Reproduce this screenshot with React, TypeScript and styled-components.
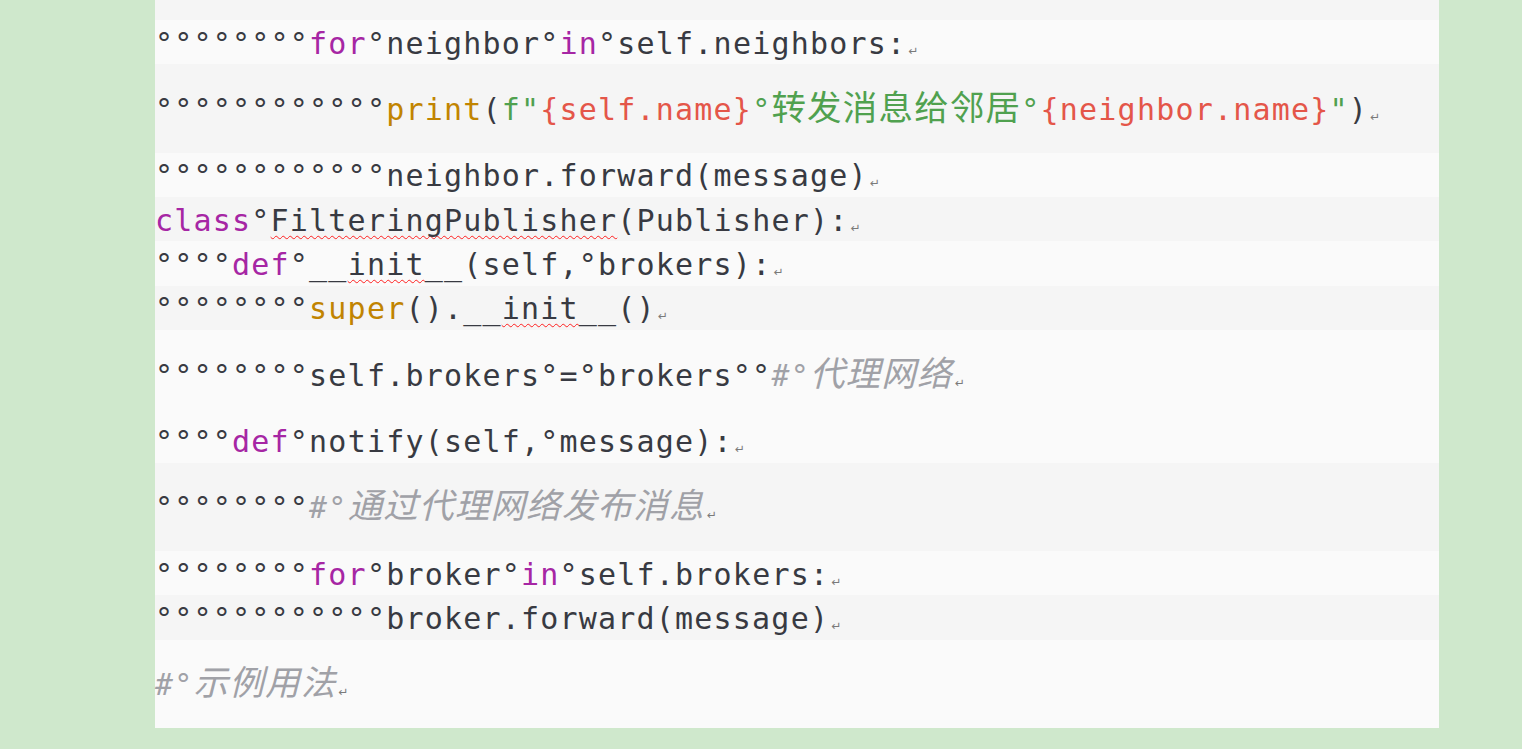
import React from "react";
import styled, { createGlobalStyle } from "styled-components";

const Global = createGlobalStyle`
  html, body {
    margin: 0;
    padding: 0;
    background: #cfe8cc;
  }
  body {
    font-family: "DejaVu Sans Mono", "Noto Sans CJK SC", monospace;
  }
`;

const Page = styled.main`
  margin-left: 155px;
  width: 1284px;
  background: #fafafa;
  display: flex;
  flex-direction: column;
`;

const Stub = styled.div`
  height: 20px;
  background: #f5f5f5;
`;

const Row = styled.div<{ $tall?: boolean; $shade?: boolean }>`
  height: ${(p) => (p.$tall ? "88.5px" : "44.25px")};
  background: ${(p) => (p.$shade ? "#f5f5f5" : "#fafafa")};
  display: flex;
  align-items: center;
`;

const Line = styled.p`
  margin: 0;
  padding-top: 10px;
  white-space: pre;
  font-size: 30px;
  line-height: 44px;
  letter-spacing: 1.2px;
  color: #383a42;
`;

const Kw = styled.span`
  color: #a626a4;
`;

const Fn = styled.span`
  color: #c18401;
`;

const Str = styled.span`
  color: #50a14f;
`;

const Interp = styled.span`
  color: #e45649;
`;

const Cmt = styled.span`
  color: #a0a1a7;
  font-style: italic;
`;

const Han = styled.span`
  font-family: "Noto Sans CJK SC", sans-serif;
  font-size: 34.5px;
  line-height: 1;
`;

const Squiggle = styled.span`
  text-decoration-line: underline;
  text-decoration-style: wavy;
  text-decoration-color: #ff1f1f;
  text-decoration-thickness: 1px;
  text-underline-offset: 4px;
  text-decoration-skip-ink: none;
`;

const Mark = styled.span`
  font-family: "DejaVu Sans", sans-serif;
  font-style: normal;
  font-size: 12px;
  letter-spacing: 0;
  color: #7a7a7a;
  margin-left: 2px;
  vertical-align: -1px;
`;

const P = () => <Mark>↵</Mark>;

export default function App() {
  return (
    <>
      <Global />
      <Page>
        <Stub />
        <Row>
          <Line>
            °°°°°°°°<Kw>for</Kw>°neighbor°<Kw>in</Kw>°self.neighbors:
            <P />
          </Line>
        </Row>
        <Row $tall $shade>
          <Line>
            °°°°°°°°°°°°<Fn>print</Fn>(<Str>f"</Str>
            <Interp>{"{self.name}"}</Interp>
            <Str>
              °<Han>转发消息给邻居</Han>°
            </Str>
            <Interp>{"{neighbor.name}"}</Interp>
            <Str>"</Str>)
            <P />
          </Line>
        </Row>
        <Row>
          <Line>
            °°°°°°°°°°°°neighbor.forward(message)
            <P />
          </Line>
        </Row>
        <Row $shade>
          <Line>
            <Kw>class</Kw>°<Squiggle>FilteringPublisher</Squiggle>(Publisher):
            <P />
          </Line>
        </Row>
        <Row>
          <Line>
            °°°°<Kw>def</Kw>°__<Squiggle>init</Squiggle>__(self,°brokers):
            <P />
          </Line>
        </Row>
        <Row $shade>
          <Line>
            °°°°°°°°<Fn>super</Fn>().__<Squiggle>init</Squiggle>__()
            <P />
          </Line>
        </Row>
        <Row $tall>
          <Line>
            °°°°°°°°self.brokers°=°brokers°°
            <Cmt>
              #°<Han>代理网络</Han>
            </Cmt>
            <P />
          </Line>
        </Row>
        <Row>
          <Line>
            °°°°<Kw>def</Kw>°notify(self,°message):
            <P />
          </Line>
        </Row>
        <Row $tall $shade>
          <Line>
            °°°°°°°°
            <Cmt>
              #°<Han>通过代理网络发布消息</Han>
            </Cmt>
            <P />
          </Line>
        </Row>
        <Row>
          <Line>
            °°°°°°°°<Kw>for</Kw>°broker°<Kw>in</Kw>°self.brokers:
            <P />
          </Line>
        </Row>
        <Row $shade>
          <Line>
            °°°°°°°°°°°°broker.forward(message)
            <P />
          </Line>
        </Row>
        <Row $tall>
          <Line>
            <Cmt>
              #°<Han>示例用法</Han>
            </Cmt>
            <P />
          </Line>
        </Row>
      </Page>
    </>
  );
}
